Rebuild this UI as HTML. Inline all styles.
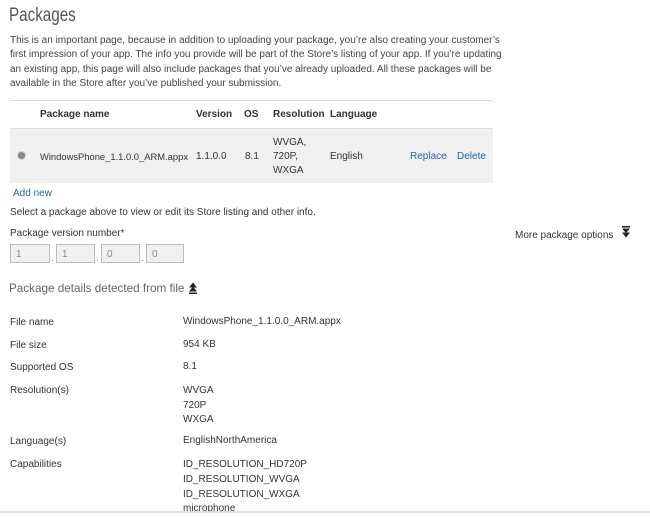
<!DOCTYPE html>
<html><head><style>
body{margin:0;width:650px;height:513px;overflow:hidden;background:#fff;font-family:"Liberation Sans",sans-serif;color:#333;position:relative}
.a{position:absolute;white-space:nowrap;font-size:10px;line-height:12px}
h1{position:absolute;left:9px;top:5px;margin:0;font-weight:normal;font-size:19px;color:#555;transform:scaleX(0.8);transform-origin:left}
.p{position:absolute;left:10px;top:34px;font-size:10px;line-height:14.4px;white-space:nowrap;color:#444}
.b{font-weight:bold;color:#333}
.l{color:#2266aa}
.in{position:absolute;top:244px;height:19px;border:1px solid #bbb;background:#f0f0f0;font-size:10px;color:#888;box-sizing:border-box;padding:4px 5px}
.dot{position:absolute;top:253px;font-size:10px;color:#888}
</style></head><body>
<h1>Packages</h1>
<div class="p">This is an important page, because in addition to uploading your package, you’re also creating your customer’s<br>first impression of your app. The info you provide will be part of the Store’s listing of your app. If you’re updating<br>an existing app, this page will also include packages that you’ve already uploaded. All these packages will be<br>available in the Store after you’ve published your submission.</div>
<div style="position:absolute;left:10px;top:100px;width:483px;height:1px;background:#ddd"></div>
<div class="a b" style="left:40px;top:109px">Package name</div>
<div class="a b" style="left:196px;top:109px">Version</div>
<div class="a b" style="left:244px;top:109px">OS</div>
<div class="a b" style="left:273px;top:109px">Resolution</div>
<div class="a b" style="left:330px;top:109px">Language</div>
<div style="position:absolute;left:10px;top:128px;width:483px;height:54px;background:#f0f0f0;border-top:1px solid #ddd"></div>
<div style="position:absolute;left:17px;top:151px;width:7px;height:7px;border-radius:50%;background:#888;border:1px solid #ccc"></div>
<div class="a" style="left:40px;top:151px;font-size:9.4px">WindowsPhone_1.1.0.0_ARM.appx</div>
<div class="a" style="left:196px;top:151px">1.1.0.0</div>
<div class="a" style="left:245px;top:151px">8.1</div>
<div class="a" style="left:273px;top:136px;line-height:14px">WVGA,<br>720P,<br>WXGA</div>
<div class="a" style="left:330px;top:151px">English</div>
<div class="a l" style="left:410px;top:151px">Replace</div>
<div class="a l" style="left:457px;top:151px">Delete</div>
<div class="a l" style="left:13px;top:188px">Add new</div>
<div class="a" style="left:10px;top:207px">Select a package above to view or edit its Store listing and other info.</div>
<div class="a" style="left:10px;top:228px">Package version number*</div>
<div class="in" style="left:10px;width:40px">1</div><div class="dot" style="left:51px">.</div>
<div class="in" style="left:56px;width:39px">1</div><div class="dot" style="left:96px">.</div>
<div class="in" style="left:101px;width:39px">0</div><div class="dot" style="left:141px">.</div>
<div class="in" style="left:146px;width:38px">0</div>
<div class="a" style="left:515px;top:230px">More package options</div>
<svg style="position:absolute;left:621px;top:226px" width="10" height="12" viewBox="0 0 10 12"><rect x="1" y="0" width="8" height="1.5" fill="#222"/><path d="M1 2.5h8L5 7z" fill="#222"/><path d="M1 6.5h8L5 11.5z" fill="#222"/></svg>
<div class="a" style="left:9px;top:282px;font-size:11.7px;line-height:14px;color:#666">Package details detected from file</div>
<svg style="position:absolute;left:188px;top:282px" width="10" height="12" viewBox="0 0 10 12"><path d="M5 0.5L9 5.5H1z" fill="#222"/><path d="M5 4.5L9 9.5H1z" fill="#222"/><rect x="1" y="10.5" width="8" height="1.5" fill="#222"/></svg>
<div class="a" style="left:10px;top:317px">File name</div><div class="a" style="left:183px;top:316px">WindowsPhone_1.1.0.0_ARM.appx</div>
<div class="a" style="left:10px;top:340px">File size</div><div class="a" style="left:183px;top:339px">954 KB</div>
<div class="a" style="left:10px;top:362px">Supported OS</div><div class="a" style="left:183px;top:361px">8.1</div>
<div class="a" style="left:10px;top:385px">Resolution(s)</div><div class="a" style="left:183px;top:384px;line-height:14.5px">WVGA<br>720P<br>WXGA</div>
<div class="a" style="left:10px;top:436px">Language(s)</div><div class="a" style="left:183px;top:435px">EnglishNorthAmerica</div>
<div class="a" style="left:10px;top:459px">Capabilities</div><div class="a" style="left:183px;top:458px;line-height:14.8px">ID_RESOLUTION_HD720P<br>ID_RESOLUTION_WVGA<br>ID_RESOLUTION_WXGA<br>microphone</div>
<div style="position:absolute;left:0;top:511px;width:650px;height:2px;background:#ddd"></div>
</body></html>
